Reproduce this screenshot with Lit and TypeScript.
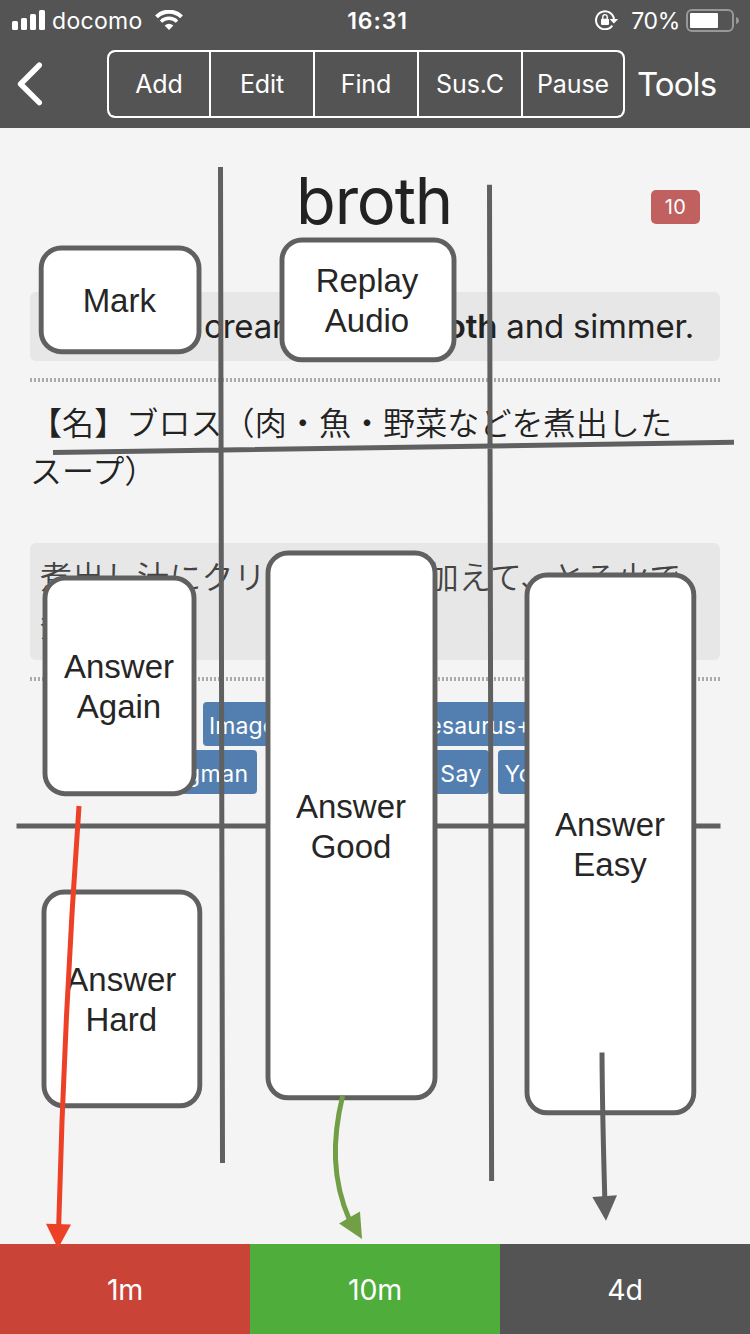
import { LitElement, html, svg, css } from "lit";
import { customElement } from "lit/decorators.js";

interface ZoneBox {
  x1: number; y1: number; x2: number; y2: number;
  cx: number; base: number; lines: string[];
}

@customElement("status-bar")
class StatusBar extends LitElement {
  static styles = css`
    :host { display: grid; grid-template-columns: 1fr auto 1fr; align-items: center; height: 40px; padding: 0 11px 0 12px; color: #fff; font: 400 22px/42px Inter, sans-serif; }
    .left, .right { display: flex; align-items: center; }
    .right { justify-content: flex-end; }
    .carrier { width: 91px; margin: 0 12px 0 7px; font-size: 23px; font-weight: 400; letter-spacing: 0.3px; }
    .time { font-weight: 600; letter-spacing: 0.9px; padding-left: 4px; font-size: 23px; }
    .pct { margin: 0 6px 0 12px; letter-spacing: -0.3px; font-size: 23px; font-weight: 400; }
    svg { display: block; margin-bottom: 2px; }
  `;
  render() {
    return html`
      <div class="left">
        <svg width="33" height="20" viewBox="0 0 33 20" fill="#fff">
          <rect x="0" y="11" width="6" height="9" rx="1.5"/><rect x="9" y="8" width="6" height="12" rx="1.5"/>
          <rect x="18" y="4" width="6" height="16" rx="1.5"/><rect x="27" y="0" width="6" height="20" rx="1.5"/>
        </svg>
        <span class="carrier">docomo</span>
        <svg width="28" height="20" viewBox="0 0 28 20" fill="none" stroke="#fff">
          <path d="M1.5 6.8A17.8 17.8 0 0 1 26.5 6.8" stroke-width="4"/>
          <path d="M6 11.6A11.4 11.4 0 0 1 22 11.6" stroke-width="3.4"/>
          <path d="M14 20L9.6 15.4Q14 12 18.4 15.4Z" fill="#fff" stroke="none"/>
        </svg>
      </div>
      <span class="time">16:31</span>
      <div class="right">
        <svg width="24" height="20" viewBox="0 0 24 20" fill="none" stroke="#fff">
          <path d="M17.3 15.6A9 9 0 1 1 19 9.5" stroke-width="2"/>
          <path d="M14.6 9H23.2L18.9 13.6Z" fill="#fff" stroke="none"/>
          <rect x="6" y="8.7" width="8" height="6.2" rx="0.8" fill="#fff" stroke="none"/>
          <path d="M7.8 9V7a2.2 2.4 0 0 1 4.4 0V9" stroke-width="1.4"/>
        </svg>
        <span class="pct">70%</span>
        <svg width="53" height="23" viewBox="0 0 53 23">
          <rect x="1" y="1" width="46" height="21" rx="5" fill="none" stroke="#989898" stroke-width="2"/>
          <rect x="4" y="4" width="28" height="15" rx="1" fill="#fff"/>
          <path d="M50 8Q53 9 53 11.5T50 15Z" fill="#989898"/>
        </svg>
      </div>`;
  }
}

@customElement("nav-bar")
class NavBar extends LitElement {
  static styles = css`
    :host { display: flex; align-items: center; height: 88px; box-sizing: border-box; padding: 0 0 0 17px; color: #fff; font-family: Inter, sans-serif; }
    .back { display: block; margin-right: 65px; }
    .seg { display: grid; grid-template-columns: 100px repeat(3, 102px) 100px; gap: 2px; background: #fff; border: 2px solid #fff; border-radius: 8px; height: 64px; overflow: hidden; }
    .item { background: #545454; display: flex; align-items: center; justify-content: center; font-size: 25px; font-weight: 400; letter-spacing: -0.1px; }
    .item:first-child { border-radius: 6px 0 0 6px; }
    .item:last-child { border-radius: 0 6px 6px 0; }
    .tools { margin-left: 12px; font-size: 33px; font-weight: 400; letter-spacing: -0.9px; }
  `;
  render() {
    return html`
      <svg class="back" width="25" height="44" viewBox="0 0 25 44"><path d="M22.3 3.2L3.6 22L22.3 40.6" fill="none" stroke="#fff" stroke-width="5.5" stroke-linecap="round" stroke-linejoin="round"/></svg>
      <div class="seg">${["Add", "Edit", "Find", "Sus.C", "Pause"].map((t) => html`<div class="item">${t}</div>`)}</div>
      <span class="tools">Tools</span>`;
  }
}

@customElement("flash-card")
class FlashCard extends LitElement {
  static styles = css`
    :host { display: block; height: 1116px; box-sizing: border-box; padding: 0 30px; color: #222; font-family: Inter, "Noto Sans CJK JP", sans-serif; }
    .head { display: grid; grid-template-columns: 1fr auto 1fr; align-items: start; height: 164px; box-sizing: border-box; padding: 34px 2px 0 0; }
    .word { grid-column: 2; font-size: 65px; line-height: 78px; letter-spacing: -1.2px; }
    .badge { justify-self: end; margin: 28px 18px 0 0; width: 49px; height: 34px; border-radius: 5px; background: #c0605f; color: #fff; font-size: 20px; font-weight: 400; line-height: 34px; text-align: center; letter-spacing: 0.4px; }
    .box { background: #e7e7e7; border-radius: 6px; box-sizing: border-box; }
    .sentence { height: 69px; display: flex; justify-content: space-between; padding: 0 26px 0 174px; font-size: 33px; line-height: 69px; white-space: pre; letter-spacing: -0.2px; }
    .sentence b { font-weight: 600; }
    .rule { height: 4px; margin-top: 17px; background: repeating-linear-gradient(90deg, #aaa 0 2px, transparent 2px 4px); }
    .meaning, .translation { font-family: "Noto Sans CJK JP", sans-serif; font-size: 32px; line-height: 48px; font-weight: 350; text-spacing-trim: space-all; white-space: pre; }
    .meaning { height: 144px; box-sizing: border-box; margin-top: 15px; margin-bottom: 2px; letter-spacing: 0.1px; }
    .translation { height: 117px; padding: 8px 10px; color: #444; letter-spacing: 0.3px; }
    .links { display: flex; flex-direction: column; gap: 4px; align-items: center; margin-top: 21px; }
    .row { display: flex; gap: 9px; }
    .link { box-sizing: border-box; height: 44px; border-radius: 4px; background: #537fb0; color: #fff; font-size: 23px; line-height: 48px; letter-spacing: 0.4px; text-align: center; }
    .images { width: 105px; padding-left: 6px; text-align: left; letter-spacing: 0.1px; }
    .thesaurus { width: 152px; margin-left: 78px; padding-right: 11px; letter-spacing: 0.2px; }
    .longman { width: 117px; padding-right: 4px; } .say { width: 58px; margin-left: 165px; padding-left: 2px; } .youtube { width: 112px; padding-right: 2px; }
  `;
  render() {
    return html`
      <div class="head"><span class="word">broth</span><span class="badge">10</span></div>
      <div class="box sentence"><span>cream</span><span><b>oth</b> and simmer.</span></div>
      <div class="rule"></div>
      <div class="meaning">【名】ブロス（肉・魚・野菜などを煮出した<br>スープ）</div>
      <div class="box translation">煮出し汁にクリームなどを加えて、とろ火で<br>煮る。</div>
      <div class="rule"></div>
      <div class="links">
        <div class="row"><span class="link images">Images</span><span class="link thesaurus">Thesaurus+</span></div>
        <div class="row"><span class="link longman">Longman</span><span class="link say">Say</span><span class="link youtube">YouTube</span></div>
      </div>`;
  }
}

@customElement("tap-zones")
class TapZones extends LitElement {
  static styles = css`
    :host { position: absolute; inset: 0; pointer-events: none; }
    svg { display: block; }
    .stroke { fill: none; stroke: #606060; stroke-width: 5; }
    .zone { fill: #fff; stroke: #606060; stroke-width: 4.9; }
    .label { font: 33px "Liberation Sans", Arial, sans-serif; fill: #262626; text-anchor: middle; }
    .red { fill: none; stroke: #ec4126; stroke-width: 5; }
    .green { fill: none; stroke: #729f46; stroke-width: 5; }
  `;
  private zones: ZoneBox[] = [
    { x1: 41.2, y1: 248, x2: 199, y2: 351.7, cx: 119.3, base: 311.7, lines: ["Mark"] },
    { x1: 282, y1: 240, x2: 454, y2: 359.8, cx: 367, base: 291.7, lines: ["Replay", "Audio"] },
    { x1: 45, y1: 578, x2: 194, y2: 793.7, cx: 119, base: 677.6, lines: ["Answer", "Again"] },
    { x1: 44, y1: 892, x2: 199.8, y2: 1105.8, cx: 121.3, base: 990.6, lines: ["Answer", "Hard"] },
    { x1: 268, y1: 553, x2: 435, y2: 1097.8, cx: 351, base: 817.6, lines: ["Answer", "Good"] },
    { x1: 527, y1: 575, x2: 693.8, y2: 1112.8, cx: 610, base: 835.6, lines: ["Answer", "Easy"] },
  ];
  render() {
    return html`<svg width="750" height="1334" viewBox="0 0 750 1334">
      <path class="stroke" d="M220.5 167L222.5 1163M489.5 184.7L491.6 1181M53 452.5L734 442.3M16.5 826H720.5"/>
      ${this.zones.map((z) => svg`
        <rect class="zone" x=${z.x1} y=${z.y1} width=${z.x2 - z.x1} height=${z.y2 - z.y1} rx="20"/>
        ${z.lines.map((t, i) => svg`<text class="label" x=${z.cx} y=${z.base + i * 40}>${t}</text>`)}`)}
      <path class="red" d="M79 806Q64.2 1015 58.7 1226"/>
      <path d="M46 1223.8L71 1224.4L58 1248.5Z" fill="#ec4126"/>
      <path class="green" d="M342.6 1096C332 1140 332 1180 349.5 1220"/>
      <path d="M339 1223.6L360 1211.4L362 1239Z" fill="#729f46"/>
      <path class="stroke" d="M602 1052.5Q602.3 1110 604.8 1198"/>
      <path d="M592.3 1197L617 1195.3L606 1220.7Z" fill="#606060"/>
    </svg>`;
  }
}

@customElement("app-root")
class AppRoot extends LitElement {
  static styles = css`
    :host { display: block; position: relative; width: 750px; height: 1334px; overflow: hidden; background: #f4f4f4; }
    .top { background: #545454; }
    .answers { display: grid; grid-template-columns: repeat(3, 1fr); height: 90px; }
    .answer { color: #fff; font: 400 28.5px/92px Inter, sans-serif; letter-spacing: -0.2px; text-align: center; }
    .again { background: #c94437; } .good { background: #4fad3c; } .easy { background: #545454; }
  `;
  render() {
    return html`
      <div class="top"><status-bar></status-bar><nav-bar></nav-bar></div>
      <flash-card></flash-card>
      <div class="answers">
        <div class="answer again">1m</div><div class="answer good">10m</div><div class="answer easy">4d</div>
      </div>
      <tap-zones></tap-zones>`;
  }
}
